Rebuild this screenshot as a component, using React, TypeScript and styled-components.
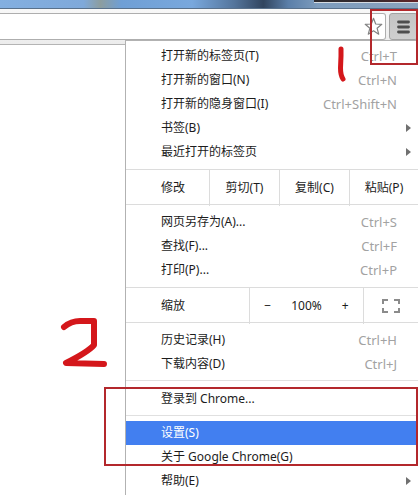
import React from 'react';
import styled, { createGlobalStyle } from 'styled-components';

const GlobalStyle = createGlobalStyle`
  *, *::before, *::after { box-sizing: border-box; }
  body {
    margin: 0;
    background: #fff;
    overflow: hidden;
    font-family: "Noto Sans", "Noto Sans CJK SC", sans-serif;
    font-size: 12px;
    line-height: 24px;
    color: #1c1c1c;
  }
  button, input { font: inherit; color: inherit; }
`;

const Browser = styled.div`
  position: relative;
  min-height: 100vh;
  overflow: hidden;
`;

const TitleBar = styled.div`
  display: flex;
  justify-content: flex-end;
  height: 9px;
  background: linear-gradient(90deg, #83afe0 0, #7fa9da 20%, #8c9d9f 24%, #6f9fd5 29%, #79a8dd 46%, #54759c 56%, #31455f 63%, #5b7fa9 69%, #7d9cbd 76%, #8ba3be 100%);
  border-bottom: 1px solid #59718b;
`;

const WindowControls = styled.div`
  width: 104px;
  height: 3px;
  background: linear-gradient(90deg, #2b2b30, #37292d 60%, #642327);
  border-bottom: 1px solid #d5dbe2;
`;

const Toolbar = styled.div`
  display: flex;
  gap: 3px;
  height: 36px;
  padding: 4px 0 4px;
  background: linear-gradient(#f8f8f8, #ececec);
  border-bottom: 1px solid #b4b4b4;
`;

const AddressBar = styled.div`
  flex: 1;
  min-width: 0;
  display: flex;
  align-items: center;
  padding-right: 2px;
  background: #fff;
  border: 1px solid #aeaeae;
  border-left: 0;
  border-radius: 0 3px 3px 0;
`;

const AddressInput = styled.input`
  flex: 1;
  min-width: 0;
  border: 0;
  outline: 0;
  background: transparent;
`;

const IconButton = styled.button`
  display: flex;
  padding: 0;
  border: 0;
  background: transparent;
`;

const MenuButton = styled.button`
  width: 29px;
  display: flex;
  align-items: center;
  justify-content: center;
  padding: 0;
  border: 1px solid #a3a3a3;
  border-radius: 3px;
  background: linear-gradient(#c4c4c4, #cfcfcf);
`;

const Menu = styled.div`
  position: absolute;
  top: 40px;
  right: 0;
  width: 293px;
  min-height: calc(100vh - 40px);
  background: #fff;
  border-top: 1px solid #b2b2b2;
  border-left: 1px solid #b2b2b2;
`;

const Group = styled.div`
  padding: 5px 0 4px;
  & + & { border-top: 1px solid #e0e0e0; }
`;

const FirstGroup = styled.div`
  padding: 3px 0 5px;
`;

const PageGroup = styled.div`
  padding: 5px 0;
`;

const AccountGroup = styled(Group)`
  padding-top: 6px;
`;

const Item = styled.button<{ $selected?: boolean }>`
  display: flex;
  justify-content: space-between;
  align-items: center;
  width: 100%;
  height: 24px;
  padding: 0 21px 0 35px;
  border: 0;
  text-align: left;
  white-space: nowrap;
  background: ${p => (p.$selected ? '#427ff0' : 'transparent')};
  color: ${p => (p.$selected ? '#fff' : '#1c1c1c')};
`;

const Shortcut = styled.span`
  font-size: 13px;
  color: #a2a2a2;
`;

const Arrow = styled.svg`
  margin-right: -14px;
`;

const ControlRow = styled.div<{ $columns: string }>`
  display: grid;
  grid-template-columns: ${p => p.$columns};
  height: 36px;
  border: solid #dcdcdc;
  border-width: 1px 0;
`;

const RowLabel = styled.div`
  padding-left: 35px;
  line-height: 36px;
`;

const Cell = styled.button`
  display: flex;
  align-items: center;
  justify-content: center;
  padding: 0;
  border: 0;
  border-left: 1px solid #dcdcdc;
  background: transparent;
  white-space: nowrap;
`;

const FullscreenCell = styled(Cell)`
  justify-content: flex-start;
  padding-left: 18px;
`;

const ZoomCell = styled.div`
  display: grid;
  grid-template-columns: 1fr 42px 1fr;
  align-items: center;
  text-align: center;
  border-left: 1px solid #dcdcdc;
`;

const ZoomStep = styled.button`
  padding: 0;
  border: 0;
  background: transparent;
`;

const Highlight = styled.div<{ $top: number; $width: number; $height: number }>`
  position: absolute;
  top: ${p => p.$top}px;
  right: 0;
  width: ${p => p.$width}px;
  height: ${p => p.$height}px;
  border: 2px solid #b3282c;
  pointer-events: none;
`;

const Stroke = styled.svg<{ $top: number; $right: number }>`
  position: absolute;
  top: ${p => p.$top}px;
  right: ${p => p.$right}px;
  fill: none;
  stroke: #d4171b;
  stroke-linecap: round;
  stroke-linejoin: round;
  pointer-events: none;
`;

type Entry = { label: string; keys?: string; submenu?: boolean; selected?: boolean };

const openItems: Entry[] = [
  { label: '打开新的标签页(T)', keys: 'Ctrl+T' },
  { label: '打开新的窗口(N)', keys: 'Ctrl+N' },
  { label: '打开新的隐身窗口(I)', keys: 'Ctrl+Shift+N' },
  { label: '书签(B)', submenu: true },
  { label: '最近打开的标签页', submenu: true },
];
const pageItems: Entry[] = [
  { label: '网页另存为(A)...', keys: 'Ctrl+S' },
  { label: '查找(F)...', keys: 'Ctrl+F' },
  { label: '打印(P)...', keys: 'Ctrl+P' },
];
const historyItems: Entry[] = [
  { label: '历史记录(H)', keys: 'Ctrl+H' },
  { label: '下载内容(D)', keys: 'Ctrl+J' },
];
const accountItems: Entry[] = [{ label: '登录到 Chrome...' }];
const settingsItems: Entry[] = [
  { label: '设置(S)', selected: true },
  { label: '关于 Google Chrome(G)' },
  { label: '帮助(E)', submenu: true },
];

const Items = ({ entries }: { entries: Entry[] }) => (
  <>
    {entries.map(e => (
      <Item key={e.label} role="menuitem" $selected={e.selected}>
        <span>{e.label}</span>
        {e.keys && <Shortcut>{e.keys}</Shortcut>}
        {e.submenu && (
          <Arrow width="5" height="8" viewBox="0 0 5 8" aria-hidden="true">
            <path d="M0 0L5 4L0 8Z" fill="#707070" />
          </Arrow>
        )}
      </Item>
    ))}
  </>
);

export default function App() {
  return (
    <Browser>
      <GlobalStyle />
      <TitleBar>
        <WindowControls />
      </TitleBar>
      <Toolbar>
        <AddressBar>
          <AddressInput aria-label="地址栏" />
          <IconButton aria-label="收藏">
            <svg width="19" height="19" viewBox="0 0 19 19" aria-hidden="true">
              <path
                d="M9.5 1.3L11.7 7L17.8 7.3L13.1 11.2L14.7 17.2L9.5 13.8L4.3 17.2L5.9 11.2L1.2 7.3L7.3 7Z"
                fill="#fff"
                stroke="#828282"
                strokeWidth="1.2"
                strokeLinejoin="round"
              />
            </svg>
          </IconButton>
        </AddressBar>
        <MenuButton aria-label="菜单">
          <svg width="13" height="14" viewBox="0 0 13 14" aria-hidden="true">
            <path d="M1.5 2H11.5M1.5 7H11.5M1.5 12H11.5" stroke="#4e4e4e" strokeWidth="2.8" strokeLinecap="round" />
          </svg>
        </MenuButton>
      </Toolbar>

      <Menu role="menu">
        <FirstGroup>
          <Items entries={openItems} />
        </FirstGroup>
        <ControlRow $columns="83px 70px 70px 1fr">
          <RowLabel>修改</RowLabel>
          <Cell>剪切(T)</Cell>
          <Cell>复制(C)</Cell>
          <Cell>粘贴(P)</Cell>
        </ControlRow>
        <PageGroup>
          <Items entries={pageItems} />
        </PageGroup>
        <ControlRow $columns="123px 114px 1fr">
          <RowLabel>缩放</RowLabel>
          <ZoomCell>
            <ZoomStep aria-label="缩小">−</ZoomStep>
            <span>100%</span>
            <ZoomStep aria-label="放大">+</ZoomStep>
          </ZoomCell>
          <FullscreenCell aria-label="全屏">
            <svg width="18" height="14" viewBox="0 0 18 14" aria-hidden="true">
              <path d="M1 5V1H6M12 1H17V5M17 9V13H12M6 13H1V9" fill="none" stroke="#8b8b8b" strokeWidth="2" />
            </svg>
          </FullscreenCell>
        </ControlRow>
        <Group>
          <Items entries={historyItems} />
        </Group>
        <AccountGroup>
          <Items entries={accountItems} />
        </AccountGroup>
        <Group>
          <Items entries={settingsItems} />
        </Group>
      </Menu>

      <Highlight $top={9} $width={48} $height={56} />
      <Highlight $top={387} $width={314} $height={79} />
      <Stroke $top={44} $right={69} width="14" height="40" viewBox="0 0 14 40" strokeWidth="5" aria-hidden="true">
        <path d="M6 5V12L5.500 24Q5.500 31 8 35" />
      </Stroke>
      <Stroke $top={314} $right={308} width="50" height="56" viewBox="0 0 50 56" strokeWidth="6" aria-hidden="true">
        <path d="M4 13Q11 7 20 7H34V31Q28 38 6 49L44 50" />
      </Stroke>
    </Browser>
  );
}
